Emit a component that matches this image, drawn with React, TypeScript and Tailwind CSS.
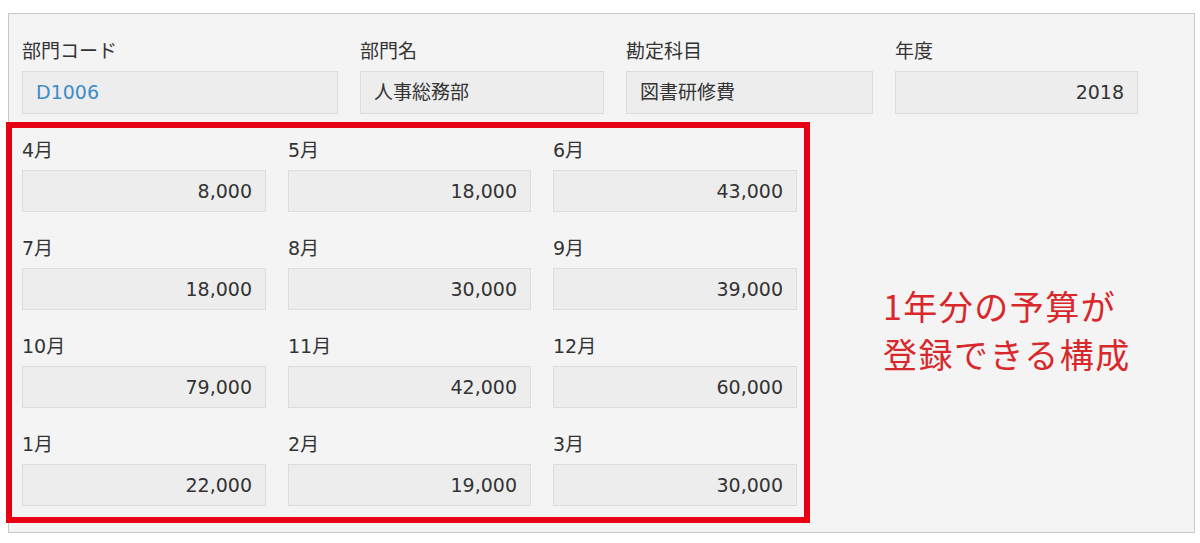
import React from "react"

const FONT = { fontFamily: '"DejaVu Sans", "Noto Sans CJK JP", sans-serif' }

const header = [
  { label: "部門コード", value: "D1006", w: "w-[316px]", link: true },
  { label: "部門名", value: "人事総務部", w: "w-[244px]" },
  { label: "勘定科目", value: "図書研修費", w: "w-[247px]" },
  { label: "年度", value: "2018", w: "w-[243px]", right: true },
]

const months = [
  ["4月", "8,000"], ["5月", "18,000"], ["6月", "43,000"],
  ["7月", "18,000"], ["8月", "30,000"], ["9月", "39,000"],
  ["10月", "79,000"], ["11月", "42,000"], ["12月", "60,000"],
  ["1月", "22,000"], ["2月", "19,000"], ["3月", "30,000"],
]

const Field = ({ label, value, w, link, right, h = "h-[43px]" }: {
  label: string; value: string; w: string; link?: boolean; right?: boolean; h?: string
}) => (
  <div className={`${w} flex flex-col`}>
    <div className="h-6 leading-6 text-[19px] text-[#333]">{label}</div>
    <div
      className={`mt-2 ${h} flex items-center px-[13px] bg-[#ededed] border border-[#dcdcdc] text-[19px] ${right ? "justify-end" : ""} ${link ? "text-[#3f8cc6]" : "text-[#333]"}`}
    >
      {value}
    </div>
  </div>
)

export default function App() {
  return (
    <div className="w-[1200px] h-[543px] bg-white pt-[13px] pl-[8px]" style={FONT}>
      <div className="w-[1187px] h-[520px] border border-[#c9c9c9] bg-[#f4f4f4] pl-[13px] pt-[25px]">
        {/* header fields */}
        <div className="flex gap-[22px]">
          {header.map((f) => (
            <Field key={f.label} {...f} />
          ))}
        </div>

        {/* monthly budget */}
        <div className="flex mt-6">
          <div className="relative">
            <div className="grid grid-cols-[244px_243px_244px] gap-x-[22px] gap-y-6">
              {months.map(([m, v]) => (
                <Field key={m} label={m} value={v} w="w-full" right h="h-[42px]" />
              ))}
            </div>
            <div className="absolute -left-[16px] -right-[13px] -top-[16px] -bottom-[17px] border-[6px] border-[#e60012] pointer-events-none" />
          </div>

          <div className="ml-[86px] mt-[144px] text-[34px] leading-[48px] tracking-[1.5px] text-[#d8282c]" style={{ fontFamily: '"Noto Sans CJK JP", sans-serif' }}>
            <div>1年分の予算が</div>
            <div>登録できる構成</div>
          </div>
        </div>
      </div>
    </div>
  )
}
